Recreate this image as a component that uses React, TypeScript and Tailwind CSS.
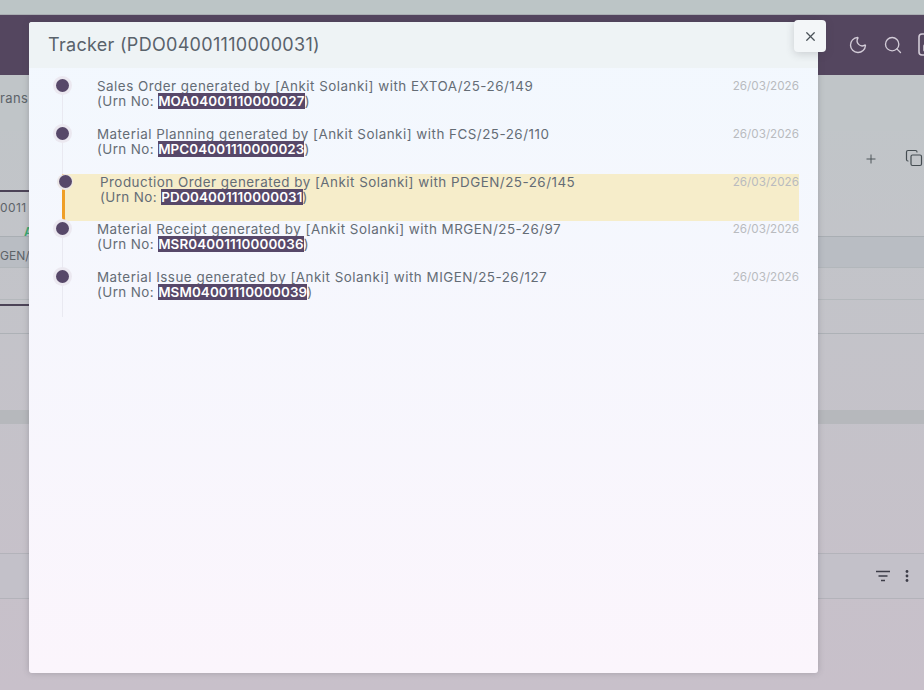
import { Copy, Moon, Plus, Search, X } from "lucide-react"

const font = "font-['Inter','Liberation_Sans',sans-serif]"

const steps = [
  { text: "Sales Order generated by [Ankit Solanki] with EXTOA/25-26/149", urn: "MOA04001110000027" },
  { text: "Material Planning generated by [Ankit Solanki] with FCS/25-26/110", urn: "MPC04001110000023" },
  { text: "Production Order generated by [Ankit Solanki] with PDGEN/25-26/145", urn: "PDO04001110000031", active: true },
  { text: "Material Receipt generated by [Ankit Solanki] with MRGEN/25-26/97", urn: "MSR04001110000036" },
  { text: "Material Issue generated by [Ankit Solanki] with MIGEN/25-26/127", urn: "MSM04001110000039" },
]

const Background = () => {
  return (
    <div className="flex h-[690px] flex-col bg-gradient-to-b from-[#bfc6c8] to-[#c8c0ca]">
      <div className="h-[15px] shrink-0 border-b border-[#a9aeb2] bg-[#bcc5c6]" />
      <div className="flex h-[60px] shrink-0 items-center justify-end gap-[14px] bg-[#54465f] text-[#d3ccd8]">
        <Moon size={20} strokeWidth={1.6} className="mt-[-1px] mr-px" />
        <Search size={20} strokeWidth={1.6} />
        <svg width="14" height="24" viewBox="0 0 14 24" fill="none" stroke="currentColor" strokeWidth="1.6" className="mr-[-8px] ml-[1px] w-[14px]">
          <rect x="1" y="1" width="20" height="21" rx="3" />
          <rect x="6" y="12" width="7" height="6" rx="1" />
          <circle cx="11" cy="6" r="1" />
        </svg>
      </div>
      <div className="flex h-[56px] shrink-0 items-center bg-[#c0c5c8] pb-[8px] text-[13px] tracking-[0.4px] text-[#5d6368]">
        <span>rans</span>
      </div>
      <div className="flex h-[59px] shrink-0 items-start justify-end gap-[27px] pt-[21px] pr-[1px] text-[#454d52]">
        <Plus size={14} strokeWidth={1.6} />
        <Copy size={18} strokeWidth={1.6} className="mt-[-3px]" />
      </div>
      <div className="relative flex h-[144px] shrink-0 flex-col">
        <div className="h-[47px] border-b border-[#a9aeb3]" />
        <div className="h-[31px] border-b border-[#b2b7bb] bg-[#b9bdc3]" />
        <div className="h-[32px] border-b border-[#b4b8bc]" />
        <div className="h-[34px] border-b border-[#adb1b6]" />
        <div className="absolute top-0 left-0 flex h-[116px] w-[40px] flex-col border-y-2 border-[#4c4357] text-[12px] text-[#5d6368]">
          <span className="mt-[8px] leading-[15px] tracking-[0.4px]">0011</span>
          <span className="mt-[9px] ml-[24px] leading-[15px] font-semibold text-[#3aa872]">A</span>
          <span className="mt-[9px] leading-[15px]">GEN/</span>
        </div>
      </div>
      <div className="mt-[76px] h-[14px] shrink-0 bg-[#b6b8bc]" />
      <div className="h-[129px] shrink-0" />
      <div className="flex h-[46px] shrink-0 items-center justify-end gap-[15px] border-y border-[#b3b3ba] bg-[#c3c1c9] pr-[15px] text-[#3d3d48]">
        <svg width="14" height="12" viewBox="0 0 14 12" fill="none" stroke="currentColor" strokeWidth="1.6">
          <path d="M0 1.5h14M2.5 6h9M5 10.5h4" />
        </svg>
        <svg width="4" height="12" viewBox="0 0 4 12" fill="currentColor">
          <circle cx="2" cy="1.5" r="1.4" />
          <circle cx="2" cy="6" r="1.4" />
          <circle cx="2" cy="10.5" r="1.4" />
        </svg>
      </div>
    </div>
  )
}

const TrackerRow = ({ text, urn, active }: { text: string; urn: string; active?: boolean }) => {
  return (
    <div className={`relative flex h-[47.75px] justify-between pt-[1px] text-[13.4px] leading-[15px] ${active ? "rounded-bl-[4px] border-l-[3px] border-[#ef9f27] bg-[#f6edca] pl-[35px]" : "border-l border-[#e9e9f1] pl-[34px]"}`}>
      <div className={`absolute flex items-center justify-center rounded-full ${active ? "top-[0px] left-[-8px] size-[16px] bg-[#ebe6e6]" : "top-[-2px] left-[-10px] size-[19px] bg-[#ebe8f0]"}`}>
        <div className="size-[13px] rounded-full bg-[#574869]" />
      </div>
      <div className="text-[#646c75]">
        <div className="whitespace-nowrap tracking-[0.5px]">{text}</div>
        <div className="whitespace-nowrap tracking-[0.4px]">
          (Urn No: <span className="bg-[#574869] font-semibold tracking-[0.12px] text-white">{urn}</span>)
        </div>
      </div>
      <div className="text-[11.7px] text-[#b9bbbf]">26/03/2026</div>
    </div>
  )
}

const TrackerModal = () => {
  return (
    <div className="absolute top-[22px] left-[29px] flex h-[651px] w-[789px] flex-col rounded-[3px] bg-gradient-to-b from-[#f2f8fe] to-[#fbf5fc] shadow-[0_0_6px_rgba(60,60,70,0.25)]">
      <div className="flex h-[46px] shrink-0 items-center rounded-t-[3px] bg-[#eef3f5] pb-[1px] pl-[19px] text-[18px] tracking-[0.3px] text-[#59626b]">
        Tracker (PDO04001110000031)
      </div>
      <div className="flex flex-col pt-[10px] pr-[19px] pl-[33px]">
        {steps.map((s) => (
          <TrackerRow key={s.urn} text={s.text} urn={s.urn} active={s.active} />
        ))}
      </div>
      <button className="absolute top-[-2px] right-[-8px] flex size-[32px] items-center justify-center rounded-[4px] bg-[#f3f6f8] text-[#4a5258] shadow-[0_2px_8px_rgba(60,60,70,0.2)]">
        <X size={15} strokeWidth={2} />
      </button>
    </div>
  )
}

export default function App() {
  return (
    <div className={`relative h-[690px] w-[924px] overflow-hidden ${font}`}>
      <Background />
      <TrackerModal />
    </div>
  )
}
